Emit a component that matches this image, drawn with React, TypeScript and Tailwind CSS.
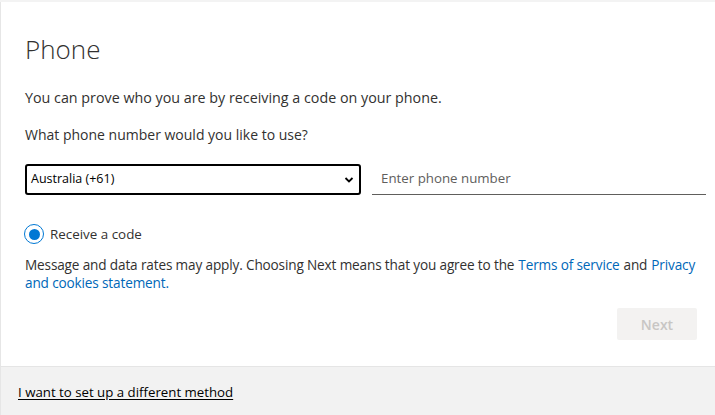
import React from "react";

export default function App() {
  return (
    <div className="w-[715px] h-[415px] bg-[#f3f3f3] pt-[2px] flex flex-col overflow-hidden text-[#323130]" style={{ fontFamily: '"Open Sans", "Noto Sans", sans-serif' }}>
      <div className="flex-1 bg-white border-l border-[#e6e6e6] flex flex-col pl-[24px] pr-[9px]">
        <h1 className="text-[26px] font-light leading-none mt-[34px] text-[#323130]">Phone</h1>
        <p className="text-[14.3px] mt-[26px] leading-[19px]">You can prove who you are by receiving a code on your phone.</p>
        <p className="text-[14px] mt-[18px] leading-[19px]">What phone number would you like to use?</p>
        <div className="flex items-start mt-[20px] gap-[11px]">
          <div className="relative w-[336px] shrink-0 h-[31px] border-2 border-black rounded-[3px] flex items-center pl-[4px]">
            <span className="text-[12.5px] text-black">Australia (+61)</span>
            <svg className="absolute right-[5px] top-[9px]" width="10" height="10" viewBox="0 0 10 10">
              <path d="M1.5 3 L5 6.5 L8.5 3" fill="none" stroke="#000" strokeWidth="1.8" />
            </svg>
          </div>
          <div className="flex-1 h-[31px] border-b border-[#605e5c] flex items-center pl-[9px]">
            <span className="text-[13.3px] text-[#605e5c]">Enter phone number</span>
          </div>
        </div>
        <div className="flex items-center mt-[29px] gap-[6px] -ml-[1px]">
          <div className="w-[20px] h-[20px] rounded-full border-[1.5px] border-[#0078d4] flex items-center justify-center">
            <div className="w-[11px] h-[11px] rounded-full bg-[#0078d4]" />
          </div>
          <span className="text-[13.4px]">Receive a code</span>
        </div>
        <div className="text-[13.6px] leading-[18px] mt-[12px] tracking-[-0.15px]">
          <div className="flex flex-wrap gap-x-[4px]">
            <span>Message and data rates may apply. Choosing Next means that you agree to the</span>
            <span className="text-[#0067b8]">Terms of service</span>
            <span>and</span>
            <span className="text-[#0067b8]">Privacy</span>
          </div>
          <div className="text-[#0067b8]">and cookies statement.</div>
        </div>
        <div className="flex justify-end mt-[16px] mr-[9px]">
          <div className="w-[80px] h-[32px] bg-[#f3f2f1] rounded-[2px] flex items-center justify-center text-[14px] font-semibold text-[#c8c6c4]">Next</div>
        </div>
      </div>
      <div className="h-[49px] bg-[#f2f2f2] border-t border-[#e5e5e5] border-l border-l-[#e6e6e6] flex items-center pl-[17px] pt-[4px]">
        <span className="text-[13.25px] text-black underline underline-offset-2">I want to set up a different method</span>
      </div>
    </div>
  );
}
